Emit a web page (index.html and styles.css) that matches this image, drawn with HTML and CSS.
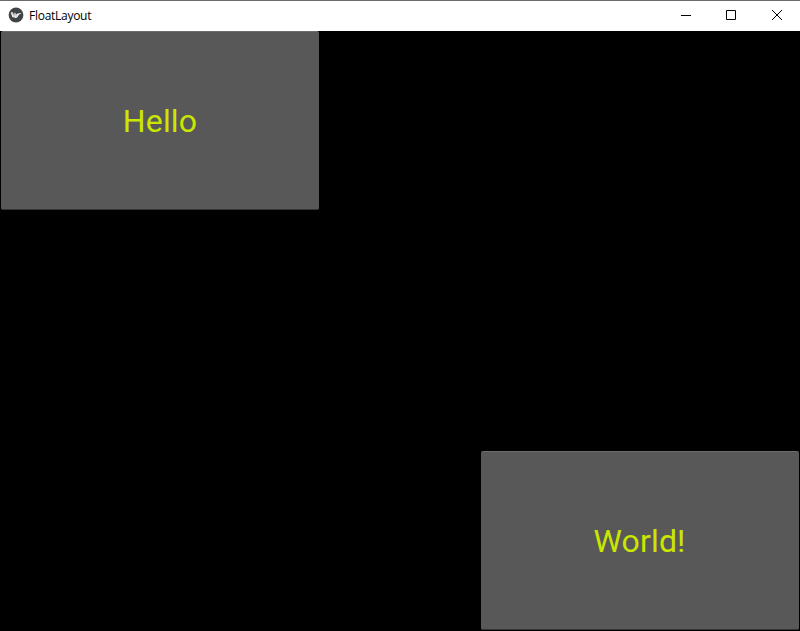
FILE: index.html
```html
<!DOCTYPE html>
<html lang="en">
<head>
<meta charset="utf-8">
<title>FloatLayout</title>
<link rel="stylesheet" href="styles.css">
</head>
<body>
<div class="window">
  <header class="titlebar">
    <svg class="logo" viewBox="0 0 16 16" width="16" height="16">
      <circle cx="8" cy="8" r="7.4" fill="#414447"/>
      <path d="M2.6 5.4 4.4 5 6.2 8 6.6 5.2 8.6 7.4 9.4 6.4 13.8 5.8 10.8 8 9.4 10.2 7.6 11.2 6.6 10.4 4.4 10.2Z" fill="#e8e8e8"/>
      <path d="M4.8 6 6.2 9.2M7 6.4 8.2 9" stroke="#8a8c8e" stroke-width=".4"/>
    </svg>
    <span class="title">FloatLayout</span>
    <div class="controls">
      <svg width="46" height="30" viewBox="0 0 46 30"><path d="M19 14.5h10"/></svg>
      <svg width="46" height="30" viewBox="0 0 46 30"><path d="M18.5 9.5h9v9h-9z"/></svg>
      <svg width="46" height="30" viewBox="0 0 46 30"><path d="M18 9l10 10M28 9l-10 10"/></svg>
    </div>
  </header>
  <main class="layout">
    <button class="btn hello">Hello</button>
    <button class="btn world">World!</button>
  </main>
</div>
</body>
</html>
```
FILE: styles.css
```css
body {
  margin: 0;
  background: #000;
}
.window {
  width: 800px;
  height: 631px;
  display: flex;
  flex-direction: column;
  overflow: hidden;
}
.titlebar {
  box-sizing: border-box;
  height: 31px;
  flex: none;
  display: flex;
  align-items: center;
  padding-left: 8px;
  background: #fff;
  border-top: 1px solid #6b6b6b;
}
.logo {
  margin-top: -2px;
}
.title {
  margin-left: 5px;
  color: #000;
  font: 12px/16px "Open Sans", "Noto Sans", sans-serif;
  letter-spacing: -0.27px;
}
.controls {
  display: flex;
  margin-left: auto;
}
.controls svg {
  fill: none;
  stroke: #000;
  stroke-width: 1;
}
.layout {
  flex: 1;
  display: flex;
  justify-content: space-between;
  background: #000;
}
.btn {
  box-sizing: border-box;
  width: 318px;
  height: 179px;
  margin: 0 1px;
  padding: 0;
  border: 1px solid #585858;
  border-top-color: #6d6d6d;
  border-bottom-color: #353535;
  border-radius: 2px;
  background: #585858;
  color: #cbe600;
  font: 32px/38px Roboto, sans-serif;
  letter-spacing: 0.15px;
}
.world {
  align-self: flex-end;
  margin-bottom: 1px;
  padding-right: 1px;
}
```
